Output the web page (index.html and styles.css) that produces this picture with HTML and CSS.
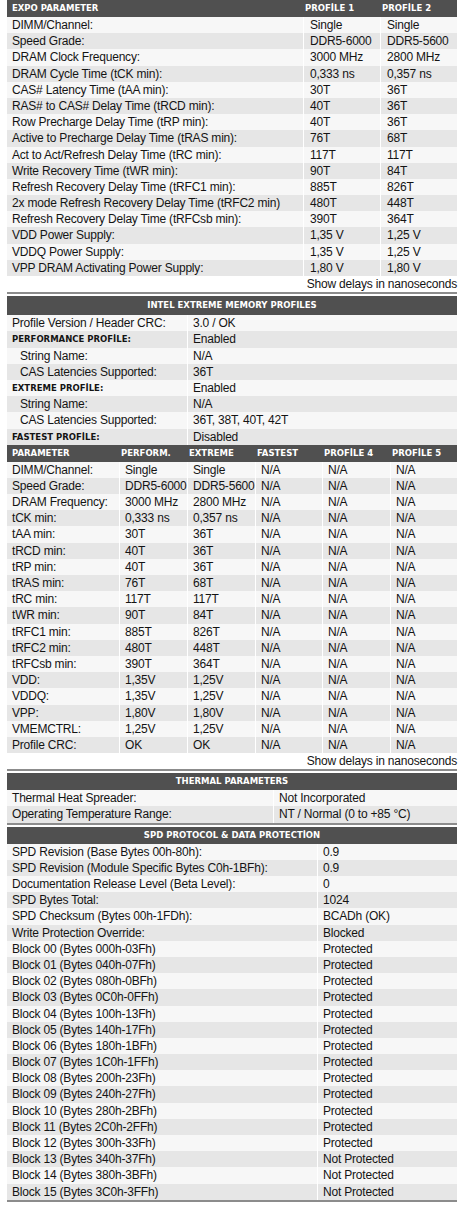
FILE: index.html
```html
<!DOCTYPE html>
<html lang="en">

<head>
    <meta charset="UTF-8">
    <meta name="viewport" content="width=device-width, initial-scale=1.0">
    <title>SPD Info</title>
    <link rel="stylesheet" href="styles.css">
</head>

<body>
    <div class="page">

        <!-- EXPO Parameters -->
        <div class="section expo">
            <div class="head grid">
                <div class="c">EXPO PARAMETER</div>
                <div class="c">PROFİLE 1</div>
                <div class="c">PROFİLE 2</div>
            </div>
            <div class="rows">
                <div class="row grid"><div class="c">DIMM/Channel:</div><div class="c">Single</div><div class="c">Single</div></div>
                <div class="row grid"><div class="c">Speed Grade:</div><div class="c">DDR5-6000</div><div class="c">DDR5-5600</div></div>
                <div class="row grid"><div class="c">DRAM Clock Frequency:</div><div class="c">3000 MHz</div><div class="c">2800 MHz</div></div>
                <div class="row grid"><div class="c">DRAM Cycle Time (tCK min):</div><div class="c">0,333 ns</div><div class="c">0,357 ns</div></div>
                <div class="row grid"><div class="c">CAS# Latency Time (tAA min):</div><div class="c">30T</div><div class="c">36T</div></div>
                <div class="row grid"><div class="c">RAS# to CAS# Delay Time (tRCD min):</div><div class="c">40T</div><div class="c">36T</div></div>
                <div class="row grid"><div class="c">Row Precharge Delay Time (tRP min):</div><div class="c">40T</div><div class="c">36T</div></div>
                <div class="row grid"><div class="c">Active to Precharge Delay Time (tRAS min):</div><div class="c">76T</div><div class="c">68T</div></div>
                <div class="row grid"><div class="c">Act to Act/Refresh Delay Time (tRC min):</div><div class="c">117T</div><div class="c">117T</div></div>
                <div class="row grid"><div class="c">Write Recovery Time (tWR min):</div><div class="c">90T</div><div class="c">84T</div></div>
                <div class="row grid"><div class="c">Refresh Recovery Delay Time (tRFC1 min):</div><div class="c">885T</div><div class="c">826T</div></div>
                <div class="row grid"><div class="c">2x mode Refresh Recovery Delay Time (tRFC2 min)</div><div class="c">480T</div><div class="c">448T</div></div>
                <div class="row grid"><div class="c">Refresh Recovery Delay Time (tRFCsb min):</div><div class="c">390T</div><div class="c">364T</div></div>
                <div class="row grid"><div class="c">VDD Power Supply:</div><div class="c">1,35 V</div><div class="c">1,25 V</div></div>
                <div class="row grid"><div class="c">VDDQ Power Supply:</div><div class="c">1,35 V</div><div class="c">1,25 V</div></div>
                <div class="row grid"><div class="c">VPP DRAM Activating Power Supply:</div><div class="c">1,80 V</div><div class="c">1,80 V</div></div>
            </div>
            <div class="note">Show delays in nanoseconds</div>
        </div>

        <!-- Intel XMP -->
        <div class="section xmp">
            <div class="head center">INTEL EXTREME MEMORY PROFILES</div>
            <div class="rows">
                <div class="row grid"><div class="c">Profile Version / Header CRC:</div><div class="c">3.0 / OK</div></div>
                <div class="row grid"><div class="c b">PERFORMANCE PROFİLE:</div><div class="c">Enabled</div></div>
                <div class="row grid"><div class="c sub">String Name:</div><div class="c">N/A</div></div>
                <div class="row grid"><div class="c sub">CAS Latencies Supported:</div><div class="c">36T</div></div>
                <div class="row grid"><div class="c b">EXTREME PROFİLE:</div><div class="c">Enabled</div></div>
                <div class="row grid"><div class="c sub">String Name:</div><div class="c">N/A</div></div>
                <div class="row grid"><div class="c sub">CAS Latencies Supported:</div><div class="c">36T, 38T, 40T, 42T</div></div>
                <div class="row grid"><div class="c b">FASTEST PROFİLE:</div><div class="c">Disabled</div></div>
            </div>
        </div>

        <!-- XMP profile parameters -->
        <div class="section params">
            <div class="head grid">
                <div class="c">PARAMETER</div>
                <div class="c">PERFORM.</div>
                <div class="c">EXTREME</div>
                <div class="c">FASTEST</div>
                <div class="c">PROFİLE 4</div>
                <div class="c">PROFİLE 5</div>
            </div>
            <div class="rows">
                <div class="row grid"><div class="c">DIMM/Channel:</div><div class="c">Single</div><div class="c">Single</div><div class="c">N/A</div><div class="c">N/A</div><div class="c">N/A</div></div>
                <div class="row grid"><div class="c">Speed Grade:</div><div class="c">DDR5-6000</div><div class="c">DDR5-5600</div><div class="c">N/A</div><div class="c">N/A</div><div class="c">N/A</div></div>
                <div class="row grid"><div class="c">DRAM Frequency:</div><div class="c">3000 MHz</div><div class="c">2800 MHz</div><div class="c">N/A</div><div class="c">N/A</div><div class="c">N/A</div></div>
                <div class="row grid"><div class="c">tCK min:</div><div class="c">0,333 ns</div><div class="c">0,357 ns</div><div class="c">N/A</div><div class="c">N/A</div><div class="c">N/A</div></div>
                <div class="row grid"><div class="c">tAA min:</div><div class="c">30T</div><div class="c">36T</div><div class="c">N/A</div><div class="c">N/A</div><div class="c">N/A</div></div>
                <div class="row grid"><div class="c">tRCD min:</div><div class="c">40T</div><div class="c">36T</div><div class="c">N/A</div><div class="c">N/A</div><div class="c">N/A</div></div>
                <div class="row grid"><div class="c">tRP min:</div><div class="c">40T</div><div class="c">36T</div><div class="c">N/A</div><div class="c">N/A</div><div class="c">N/A</div></div>
                <div class="row grid"><div class="c">tRAS min:</div><div class="c">76T</div><div class="c">68T</div><div class="c">N/A</div><div class="c">N/A</div><div class="c">N/A</div></div>
                <div class="row grid"><div class="c">tRC min:</div><div class="c">117T</div><div class="c">117T</div><div class="c">N/A</div><div class="c">N/A</div><div class="c">N/A</div></div>
                <div class="row grid"><div class="c">tWR min:</div><div class="c">90T</div><div class="c">84T</div><div class="c">N/A</div><div class="c">N/A</div><div class="c">N/A</div></div>
                <div class="row grid"><div class="c">tRFC1 min:</div><div class="c">885T</div><div class="c">826T</div><div class="c">N/A</div><div class="c">N/A</div><div class="c">N/A</div></div>
                <div class="row grid"><div class="c">tRFC2 min:</div><div class="c">480T</div><div class="c">448T</div><div class="c">N/A</div><div class="c">N/A</div><div class="c">N/A</div></div>
                <div class="row grid"><div class="c">tRFCsb min:</div><div class="c">390T</div><div class="c">364T</div><div class="c">N/A</div><div class="c">N/A</div><div class="c">N/A</div></div>
                <div class="row grid"><div class="c">VDD:</div><div class="c">1,35V</div><div class="c">1,25V</div><div class="c">N/A</div><div class="c">N/A</div><div class="c">N/A</div></div>
                <div class="row grid"><div class="c">VDDQ:</div><div class="c">1,35V</div><div class="c">1,25V</div><div class="c">N/A</div><div class="c">N/A</div><div class="c">N/A</div></div>
                <div class="row grid"><div class="c">VPP:</div><div class="c">1,80V</div><div class="c">1,80V</div><div class="c">N/A</div><div class="c">N/A</div><div class="c">N/A</div></div>
                <div class="row grid"><div class="c">VMEMCTRL:</div><div class="c">1,25V</div><div class="c">1,25V</div><div class="c">N/A</div><div class="c">N/A</div><div class="c">N/A</div></div>
                <div class="row grid"><div class="c">Profile CRC:</div><div class="c">OK</div><div class="c">OK</div><div class="c">N/A</div><div class="c">N/A</div><div class="c">N/A</div></div>
            </div>
            <div class="note">Show delays in nanoseconds</div>
        </div>

        <!-- Thermal -->
        <div class="section thermal">
            <div class="head center">THERMAL PARAMETERS</div>
            <div class="rows">
                <div class="row grid"><div class="c">Thermal Heat Spreader:</div><div class="c">Not Incorporated</div></div>
                <div class="row grid"><div class="c">Operating Temperature Range:</div><div class="c">NT / Normal (0 to +85 °C)</div></div>
            </div>
        </div>

        <!-- SPD protocol -->
        <div class="section spd">
            <div class="head center">SPD PROTOCOL &amp; DATA PROTECTİON</div>
            <div class="rows">
                <div class="row grid"><div class="c">SPD Revision (Base Bytes 00h-80h):</div><div class="c">0.9</div></div>
                <div class="row grid"><div class="c">SPD Revision (Module Specific Bytes C0h-1BFh):</div><div class="c">0.9</div></div>
                <div class="row grid"><div class="c">Documentation Release Level (Beta Level):</div><div class="c">0</div></div>
                <div class="row grid"><div class="c">SPD Bytes Total:</div><div class="c">1024</div></div>
                <div class="row grid"><div class="c">SPD Checksum (Bytes 00h-1FDh):</div><div class="c">BCADh (OK)</div></div>
                <div class="row grid"><div class="c">Write Protection Override:</div><div class="c">Blocked</div></div>
                <div class="row grid"><div class="c">Block 00 (Bytes 000h-03Fh)</div><div class="c">Protected</div></div>
                <div class="row grid"><div class="c">Block 01 (Bytes 040h-07Fh)</div><div class="c">Protected</div></div>
                <div class="row grid"><div class="c">Block 02 (Bytes 080h-0BFh)</div><div class="c">Protected</div></div>
                <div class="row grid"><div class="c">Block 03 (Bytes 0C0h-0FFh)</div><div class="c">Protected</div></div>
                <div class="row grid"><div class="c">Block 04 (Bytes 100h-13Fh)</div><div class="c">Protected</div></div>
                <div class="row grid"><div class="c">Block 05 (Bytes 140h-17Fh)</div><div class="c">Protected</div></div>
                <div class="row grid"><div class="c">Block 06 (Bytes 180h-1BFh)</div><div class="c">Protected</div></div>
                <div class="row grid"><div class="c">Block 07 (Bytes 1C0h-1FFh)</div><div class="c">Protected</div></div>
                <div class="row grid"><div class="c">Block 08 (Bytes 200h-23Fh)</div><div class="c">Protected</div></div>
                <div class="row grid"><div class="c">Block 09 (Bytes 240h-27Fh)</div><div class="c">Protected</div></div>
                <div class="row grid"><div class="c">Block 10 (Bytes 280h-2BFh)</div><div class="c">Protected</div></div>
                <div class="row grid"><div class="c">Block 11 (Bytes 2C0h-2FFh)</div><div class="c">Protected</div></div>
                <div class="row grid"><div class="c">Block 12 (Bytes 300h-33Fh)</div><div class="c">Protected</div></div>
                <div class="row grid"><div class="c">Block 13 (Bytes 340h-37Fh)</div><div class="c">Not Protected</div></div>
                <div class="row grid"><div class="c">Block 14 (Bytes 380h-3BFh)</div><div class="c">Not Protected</div></div>
                <div class="row grid"><div class="c">Block 15 (Bytes 3C0h-3FFh)</div><div class="c">Not Protected</div></div>
            </div>
        </div>

    </div>
</body>

</html>
```

FILE: styles.css
```css
/* Page */
body {
    margin: 0;
    background-color: #fff;
    color: #141414;
    font-family: 'Liberation Sans', Arial, sans-serif;
    font-size: 12px;
    letter-spacing: -0.2px;
}

.page {
    width: 450px;
    margin-left: 7px;
}

/* Sections */
.section {
    border-bottom: 2px solid #8c8c8c;
    margin-bottom: 2px;
}

.section.xmp {
    border-bottom: none;
    margin-bottom: 0;
}

.grid {
    display: grid;
}

.expo .grid { grid-template-columns: 296px 77px 77px; }
.xmp .grid { grid-template-columns: 180px 270px; }
.params .grid { grid-template-columns: 112px 68px 68px 67px 68px 67px; }
.thermal .grid { grid-template-columns: 266px 184px; }
.spd .grid { grid-template-columns: 310px 140px; }

/* Dark header bars */
.head {
    background-color: #505050;
    color: #fff;
    font-family: 'DejaVu Sans', Verdana, sans-serif;
    font-weight: bold;
    font-size: 8.5px;
    letter-spacing: 0;
    height: 17px;
    line-height: 17px;
}

.head .c {
    padding-left: 2px;
}

.head .c:first-child {
    padding-left: 5px;
}

.head.center {
    text-align: center;
}

.xmp .head {
    height: 19px;
    line-height: 19px;
}

/* Data rows */
.row {
    height: 16.2px;
    line-height: 16.2px;
}

.rows .row:nth-child(odd) {
    background-color: #f7f7f7;
}

.rows .row:nth-child(even) {
    background-color: #e6e6e6;
}

.c {
    white-space: nowrap;
    overflow: hidden;
    padding-left: 5px;
}

.row .c + .c {
    border-left: 1px solid #fff;
}

.expo .row .c + .c {
    padding-left: 6px;
}

.c.sub {
    padding-left: 13px;
}

.c.b {
    font-family: 'DejaVu Sans', Verdana, sans-serif;
    font-weight: bold;
    font-size: 8.5px;
    letter-spacing: 0;
}

.note {
    height: 16.2px;
    line-height: 16.2px;
    text-align: right;
    background-color: #fff;
}
```
